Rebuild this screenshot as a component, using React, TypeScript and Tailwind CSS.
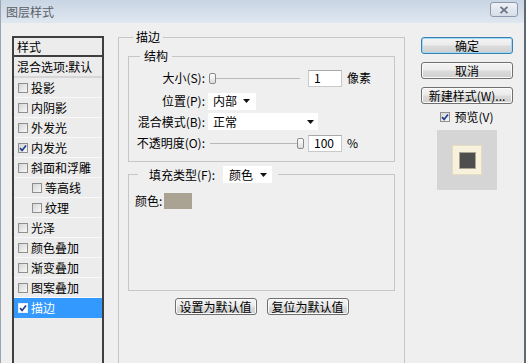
import React from "react";

function Box({ checked = false, white = false }: { checked?: boolean; white?: boolean }) {
  return (
    <span
      className={`flex h-[10px] w-[10px] shrink-0 items-center justify-center border ${
        white ? "border-[#e6eefb] bg-white" : "border-[#8f8f8f] bg-[linear-gradient(135deg,#d6d6d6,#f7f7f7)]"
      }`}
    >
      {checked && (
        <svg viewBox="0 0 8 8" className="h-[8px] w-[8px]">
          <path d="M1 4.2 L3.1 6.4 L7 1.4" fill="none" stroke="#21408c" strokeWidth="1.7" />
        </svg>
      )}
    </span>
  );
}

function Arrow() {
  return (
    <svg viewBox="0 0 7 4" className="h-[4px] w-[7px]">
      <path d="M0 0 L7 0 L3.5 4 Z" fill="#111" />
    </svg>
  );
}

function Btn({ children, primary = false, w = "w-[92px]" }: { children: React.ReactNode; primary?: boolean; w?: string }) {
  return (
    <div
      className={`flex h-[17px] ${w} items-center justify-center rounded-[3px] border text-[12px] leading-none text-black bg-[linear-gradient(#f4f4f4_0%,#ebebeb_48%,#dcdcdc_52%,#cfcfcf_100%)] ${
        primary ? "border-[#3c7fb1] shadow-[inset_0_0_0_1px_#9fdaf5]" : "border-[#707070] shadow-[inset_0_0_0_1px_#fbfbfb]"
      }`}
    >
      {children}
    </div>
  );
}

function Slider({ pos }: { pos: number }) {
  return (
    <div className="relative h-full w-[96px]">
      <div className="absolute left-[2px] right-[4px] top-[9px] h-[1px] bg-[#b9b9b9]" />
      <div
        className="absolute top-[4px] h-[11px] w-[7px] rounded-[2px] border border-[#8a8a8a] bg-[linear-gradient(#fdfdfd,#dedede)]"
        style={{ left: pos }}
      />
    </div>
  );
}

const items: { label: string; checked?: boolean; sub?: boolean; selected?: boolean }[] = [
  { label: "投影" },
  { label: "内阴影" },
  { label: "外发光" },
  { label: "内发光", checked: true },
  { label: "斜面和浮雕" },
  { label: "等高线", sub: true },
  { label: "纹理", sub: true },
  { label: "光泽" },
  { label: "颜色叠加" },
  { label: "渐变叠加" },
  { label: "图案叠加" },
  { label: "描边", checked: true, selected: true },
];

export default function App() {
  return (
    <div className="flex h-[363px] w-[526px] flex-col overflow-hidden border-l border-r-2 border-l-[#9aa6b3] border-r-[#5f6a76] bg-[#efefef] font-['Noto_Sans_CJK_SC',sans-serif] text-[12px] text-black">
      {/* title bar */}
      <div className="flex h-[23px] shrink-0 items-center justify-between bg-[linear-gradient(#c8d5e3,#dfe7f0)] pl-[5px] pr-[6px]">
        <span className="text-[12px] leading-none text-[#5a5f66]">图层样式</span>
        <div className="mb-[4px] flex h-[15px] w-[28px] items-center justify-center rounded-[3px] border border-[#8e9aab] bg-[linear-gradient(#eef2f7,#d6dee8)]">
          <svg viewBox="0 0 10 8" className="h-[8px] w-[10px]">
            <path d="M1.5 0.8 L8.5 7.2 M8.5 0.8 L1.5 7.2" stroke="#6b7684" strokeWidth="1.8" />
          </svg>
        </div>
      </div>

      {/* body */}
      <div className="flex flex-1 pl-[11px] pt-[13px]">
        {/* left list */}
        <div className="h-[340px] w-[92px] shrink-0 border-2 border-[#3f3f3f] bg-[#ececec]">
          <div className="flex h-[19px] items-center border-b-2 border-[#3f3f3f] pl-[3px] leading-none">样式</div>
          <div className="flex h-[21px] items-center border-b-2 border-[#d6d6d6] pl-[3px] leading-none">混合选项:默认</div>
          {items.map((it) => (
            <div
              key={it.label}
              className={`flex h-[20px] items-center gap-[3px] border-b leading-none ${it.sub ? "pl-[18px]" : "pl-[4px]"} ${
                it.selected ? "border-[#3399ff] bg-[#3399ff] text-white" : "border-[#f9f9f9]"
              }`}
            >
              <Box checked={it.checked} white={it.selected} />
              <span>{it.label}</span>
            </div>
          ))}
        </div>

        {/* main group 描边 */}
        <div className="relative ml-[14px] mt-[1px] h-[340px] w-[287px] shrink-0 border border-[#c6c6c6] px-[9px] pt-[18px]">
          <span className="absolute -top-[8px] left-[14px] bg-[#efefef] px-[3px] leading-[14px]">描边</span>

          {/* 结构 */}
          <div className="relative h-[106px] border border-[#c6c6c6] pt-[12px]">
            <span className="absolute -top-[8px] left-[11px] bg-[#efefef] px-[4px] leading-[14px]">结构</span>

            <div className="flex h-[18px] items-center">
              <span className="w-[76px] text-right leading-none">大小(S):</span>
              <div className="ml-[3px] h-full">
                <Slider pos={1} />
              </div>
              <div className="ml-[4px] flex h-[17px] w-[34px] items-center border border-[#c9c9c9] border-t-[#a9a9a9] bg-white pl-[5px] leading-none">1</div>
              <span className="ml-[5px] leading-none">像素</span>
            </div>

            <div className="mt-[5px] flex h-[18px] items-center">
              <span className="w-[76px] text-right leading-none">位置(P):</span>
              <div className="ml-[3px] flex h-[17px] w-[48px] items-center justify-between bg-white pl-[5px] pr-[6px] leading-none">
                <span>内部</span>
                <Arrow />
              </div>
            </div>

            <div className="mt-[3px] flex h-[17px] items-center">
              <span className="w-[76px] text-right leading-none">混合模式(B):</span>
              <div className="ml-[3px] flex h-[17px] w-[110px] items-center justify-between bg-white pl-[5px] pr-[4px] leading-none">
                <span>正常</span>
                <Arrow />
              </div>
            </div>

            <div className="mt-[4px] flex h-[18px] items-center">
              <span className="w-[76px] text-right leading-none">不透明度(O):</span>
              <div className="ml-[3px] h-full">
                <Slider pos={89} />
              </div>
              <div className="ml-[4px] flex h-[17px] w-[34px] items-center border border-[#c9c9c9] border-t-[#a9a9a9] bg-white pl-[5px] leading-none">100</div>
              <span className="ml-[5px] leading-none">%</span>
            </div>
          </div>

          {/* 填充类型 */}
          <div className="relative mt-[12px] h-[117px] border border-[#c6c6c6] pl-[6px] pt-[18px]">
            <div className="absolute -top-[9px] left-[9px] flex items-center gap-[8px] bg-[#efefef] pl-[11px] pr-[6px]">
              <span className="leading-none">填充类型(F):</span>
              <div className="flex h-[17px] w-[49px] items-center justify-between bg-white pl-[6px] pr-[5px] leading-none">
                <span>颜色</span>
                <Arrow />
              </div>
            </div>
            <div className="flex items-center gap-[2px]">
              <span className="leading-none">颜色:</span>
              <div className="h-[16px] w-[28px] bg-[#aaa393]" />
            </div>
          </div>

          <div className="mt-[7px] flex justify-center gap-[10px]">
            <Btn w="w-[82px]">设置为默认值</Btn>
            <Btn w="w-[82px]">复位为默认值</Btn>
          </div>
        </div>

        {/* right column */}
        <div className="ml-[16px] flex w-[92px] shrink-0 flex-col items-center pt-[1px]">
          <div className="flex flex-col gap-[8px]">
            <Btn primary>确定</Btn>
            <Btn>取消</Btn>
            <Btn>新建样式(W)...</Btn>
          </div>
          <div className="mt-[6px] flex h-[14px] items-center gap-[4px] leading-none">
            <Box checked />
            <span>预览(V)</span>
          </div>
          <div className="mt-[6px] flex h-[60px] w-[60px] items-center justify-center bg-[#d5d5d5]">
            <div className="flex h-[28px] w-[28px] items-center justify-center bg-[#f8f1dc] shadow-[0_0_0_1px_#e6dcc2]">
              <div className="h-[17px] w-[17px] border border-[#aaa393] bg-[#4e4e4e]" />
            </div>
          </div>
        </div>
      </div>
    </div>
  );
}
